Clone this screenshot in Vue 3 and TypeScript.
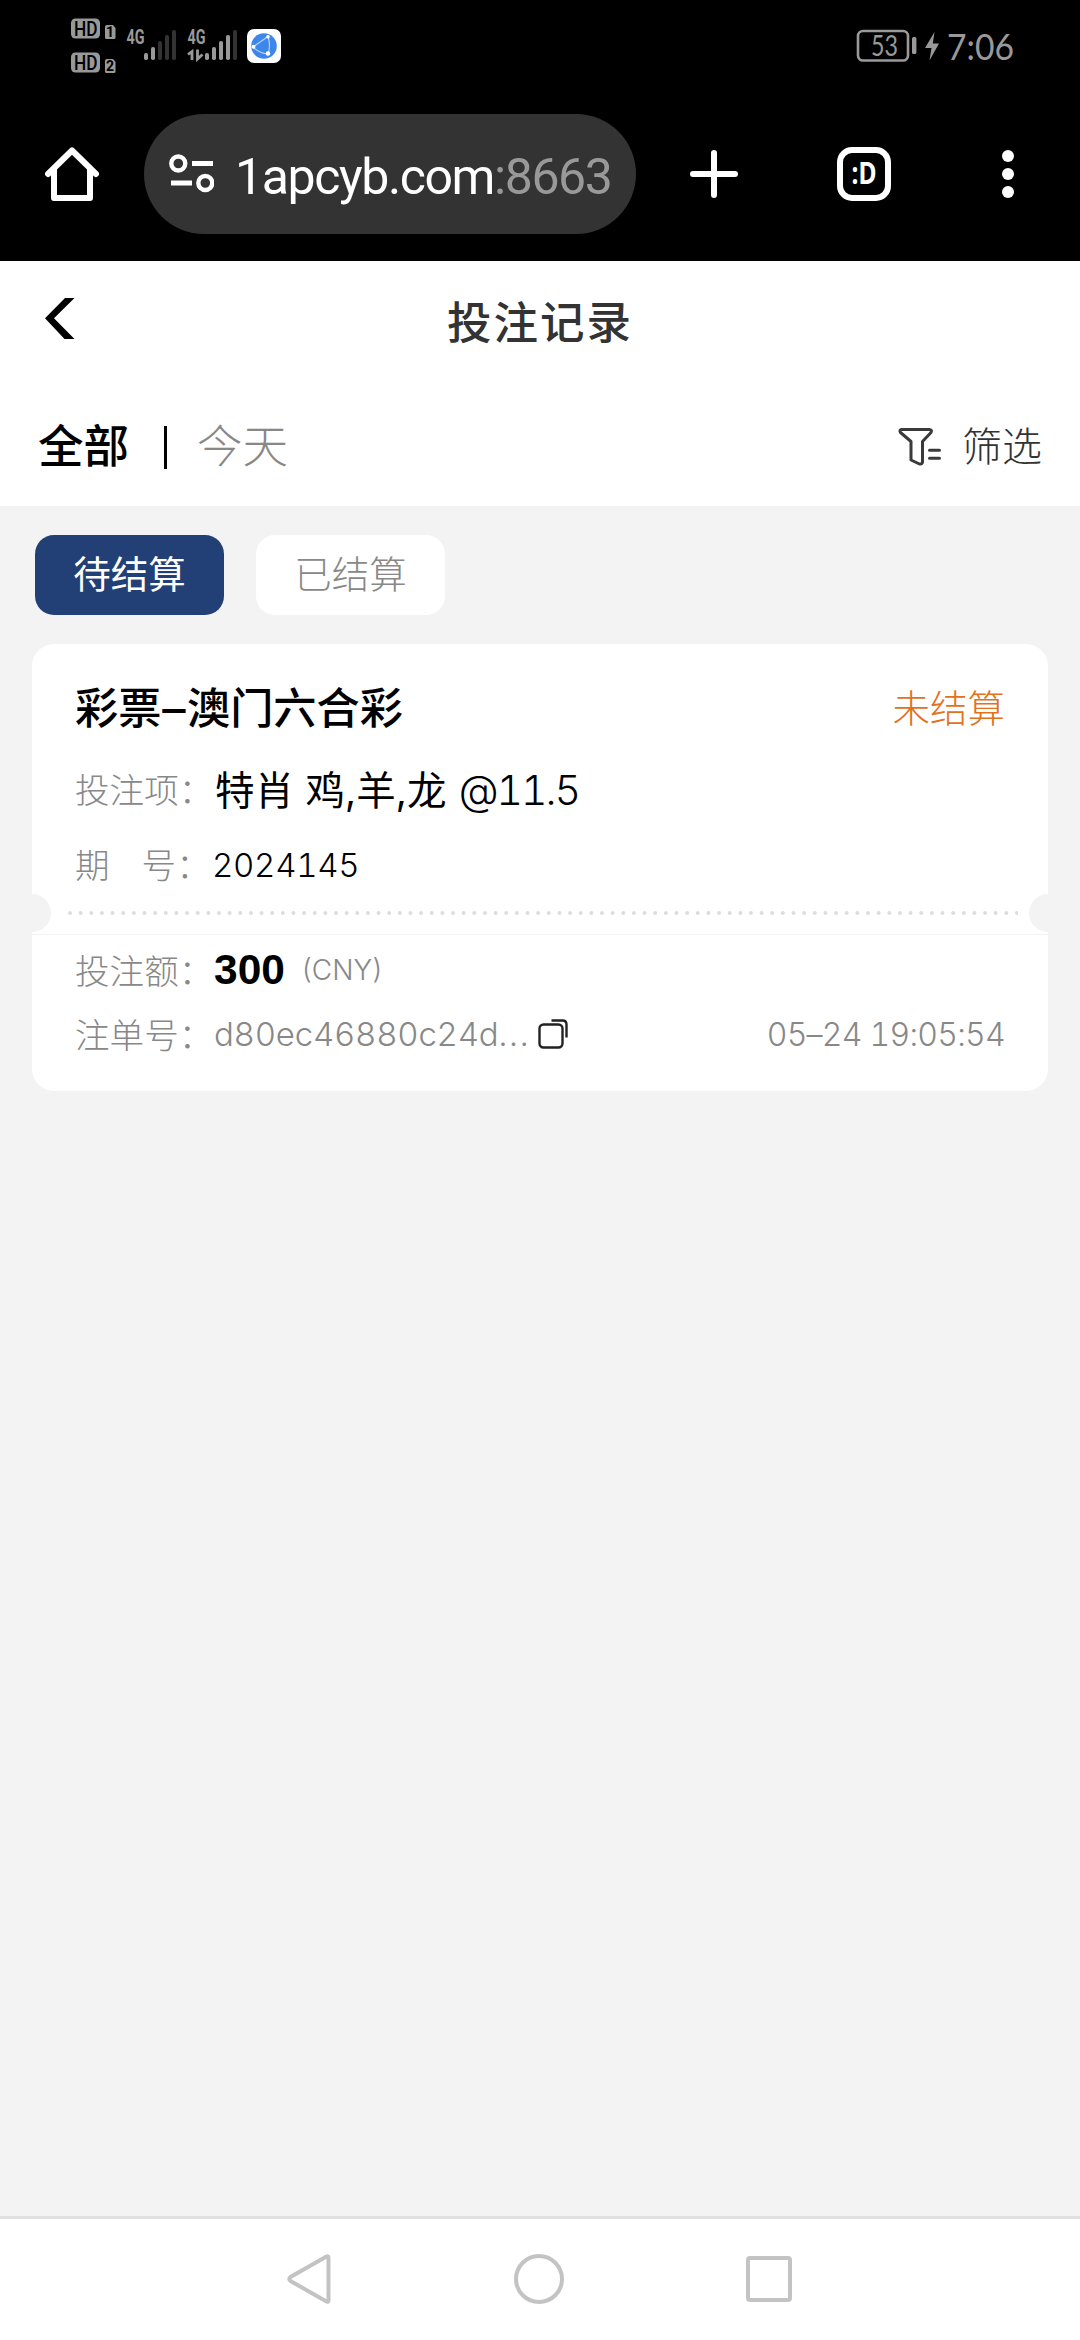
<script setup lang="ts">
import { ref } from 'vue'

interface Tab { key: string; label: string }

const ranges: Tab[] = [
  { key: 'all', label: '全部' },
  { key: 'today', label: '今天' },
]
const states: Tab[] = [
  { key: 'open', label: '待结算' },
  { key: 'settled', label: '已结算' },
]
const range = ref('all')
const state = ref('open')

const signalHeights: number[] = [7, 13, 19, 25, 30]
const signals = [
  { id: 1, x: 144, level: 2 },
  { id: 2, x: 205, level: 4 },
]
</script>

<template>
  <div class="screen">
    <header class="chrome">
      <div class="status">
        <svg class="status-left" width="300" height="90" viewBox="0 0 300 90">
          <g fill="#999">
            <rect x="71" y="18.500" width="29" height="20" rx="4.500" />
            <rect x="71" y="52.500" width="29" height="20" rx="4.500" />
            <path d="M107 25h6l2.500 3v9.500a1.500 1.500 0 0 1-1.500 1.500h-7.500a1.500 1.500 0 0 1-1.500-1.500V27a2 2 0 0 1 2-2z" />
            <path d="M107 59h6l2.500 3v9.500a1.500 1.500 0 0 1-1.500 1.500h-7.500a1.500 1.500 0 0 1-1.500-1.500V61a2 2 0 0 1 2-2z" />
          </g>
          <g class="hd">
            <text x="74" y="35.500" textLength="23.500" lengthAdjust="spacingAndGlyphs">HD</text>
            <text x="74" y="69.500" textLength="23.500" lengthAdjust="spacingAndGlyphs">HD</text>
          </g>
          <g class="slot">
            <text x="110" y="37">1</text>
            <text x="110" y="71">2</text>
          </g>
          <g class="net">
            <text x="126.500" y="43.500" textLength="18" lengthAdjust="spacingAndGlyphs">4G</text>
            <text x="187.500" y="43.500" textLength="18" lengthAdjust="spacingAndGlyphs">4G</text>
          </g>
          <g v-for="s in signals" :key="s.id">
            <rect
              v-for="(h, i) in signalHeights"
              :key="i"
              :x="s.x + i * 7"
              :y="60 - h"
              width="4"
              :height="h"
              rx="1.800"
              :fill="i < s.level ? '#999' : '#333'"
            />
          </g>
          <path d="M188 54.500l4-3v8.500M197.500 49.500v9.500l5-4.500" fill="none" stroke="#999" stroke-width="2.800" />
          <rect x="247" y="29" width="34" height="34" rx="7" fill="#fff" />
          <circle cx="264" cy="46" r="12.800" fill="#3d86ea" />
          <path d="M253 47L268 36.500Q271 45 268 54Q259 53 253 47z" stroke="#b5d2fa" stroke-width="1.200" fill="none" />
          <g fill="#fff">
            <circle cx="253.500" cy="46.800" r="2" />
            <circle cx="268" cy="36.800" r="1.800" />
            <circle cx="268" cy="53.500" r="2.300" />
          </g>
        </svg>
        <svg width="240" height="90" viewBox="840 0 240 90">
          <rect x="858" y="31" width="50" height="29.500" rx="5" fill="none" stroke="#999" stroke-width="2.600" />
          <rect x="912" y="37" width="4.400" height="17" rx="1.600" fill="#999" />
          <text class="battery" x="884.500" y="55.500" textLength="27" lengthAdjust="spacingAndGlyphs">53</text>
          <path d="M934.500 32L925 48h6.500l-2 12.500L939 43.500h-6.200z" fill="#999" />
          <text class="clock" x="947" y="59.500" textLength="67" lengthAdjust="spacingAndGlyphs">7:06</text>
        </svg>
      </div>
      <div class="browser">
        <svg class="home" width="54" height="54" viewBox="0 0 54 54" fill="none" stroke="#fff" stroke-width="6" stroke-linecap="round" stroke-linejoin="round">
          <path d="M3 27L27 3.500L51 27" />
          <path d="M9 22V51H45V22" />
        </svg>
        <div class="address">
          <svg width="46" height="40" viewBox="0 0 46 40" fill="none" stroke="#fff">
            <circle cx="10.300" cy="9.500" r="7" stroke-width="4.400" />
            <circle cx="37.300" cy="29" r="7" stroke-width="4.400" />
            <path d="M24 9.500H45M3 29H24" stroke-width="4.800" />
          </svg>
          <div class="url">1apcyb.com<span>:8663</span></div>
        </div>
        <svg class="plus" width="48" height="48" viewBox="0 0 48 48" stroke="#fff" stroke-width="6" stroke-linecap="round">
          <path d="M24 3V45M3 24H45" />
        </svg>
        <div class="tabcount"><span>:D</span></div>
        <svg class="more" width="12" height="48" viewBox="0 0 12 48" fill="#fff">
          <circle cx="6" cy="6" r="6" /><circle cx="6" cy="24" r="6" /><circle cx="6" cy="42" r="6" />
        </svg>
      </div>
    </header>

    <section class="head">
      <div class="titlebar">
        <svg class="back" width="30" height="41" viewBox="0 0 30 41">
          <path d="M20 0H29.500L9 20.300L29.500 41H19.500L0 20.300z" fill="#000" />
        </svg>
        <h1>投注记录</h1>
        <i class="spacer"></i>
      </div>
      <div class="ranges">
        <template v-for="(r, i) in ranges" :key="r.key">
          <i v-if="i" class="bar"></i>
          <button :class="['range', { on: range === r.key }]" @click="range = r.key">{{ r.label }}</button>
        </template>
        <div class="filter">
          <svg width="44" height="40" viewBox="0 0 44 40" fill="none" stroke="#3a3a3a" stroke-width="3" stroke-linejoin="round" stroke-linecap="round">
            <path d="M3.500 2.500H31.500Q34.500 3 33 5.500L24.500 14.500V35Q24 37.500 21.500 37L13 33V14.500L2.500 5.500Q1 3 3.500 2.500z" />
            <path d="M31.500 23.200H41.500M31.500 31.200H41.500" />
          </svg>
          <span>筛选</span>
        </div>
      </div>
    </section>

    <main>
      <div class="states">
        <button v-for="s in states" :key="s.key" :class="['state', { on: state === s.key }]" @click="state = s.key">{{ s.label }}</button>
      </div>

      <article class="card">
        <div class="upper">
          <div class="row r1">
            <h2>彩票<b class="dash">–</b>澳门六合彩</h2>
            <span class="pending">未结算</span>
          </div>
          <div class="row r2">
            <span class="label">投注项：</span>
            <span class="pick">特肖 鸡,羊,龙 <span class="odds">@11.5</span></span>
          </div>
          <div class="row r3">
            <span class="label issue"><span>期</span><span>号：</span></span>
            <span class="num">2024145</span>
          </div>
          <div class="tear">
            <i class="notch left"></i>
            <svg width="956" height="6" viewBox="0 0 956 6">
              <path d="M8 3H956" stroke="#ddd" stroke-width="4" stroke-linecap="round" stroke-dasharray="0 10.640" />
            </svg>
            <i class="notch right"></i>
          </div>
        </div>
        <div class="lower">
          <div class="row r4">
            <span class="label">投注额：</span>
            <strong>300</strong>
            <span class="cur">(CNY)</span>
          </div>
          <div class="row r5">
            <span class="label">注单号：</span>
            <span class="order">d80ec46880c24d<span class="dots">...</span></span>
            <svg class="copy" width="30" height="30" viewBox="0 0 30 30" fill="none" stroke="#222" stroke-width="2.400">
              <rect x="1.500" y="5.500" width="23" height="23" rx="4" />
              <path d="M13.500 1.500H24.500Q28.500 1.500 28.500 5.500V18.500" />
            </svg>
            <time>05–24 19:05:54</time>
          </div>
        </div>
      </article>
    </main>

    <nav class="sysnav">
      <svg width="44" height="50" viewBox="0 0 44 50"><path d="M39.500 2.500Q41.500 1.500 41.500 4V46Q41.500 48.500 39.500 47.500L3.500 27Q1 25 3.500 23z" /></svg>
      <svg width="50" height="50" viewBox="0 0 50 50"><circle cx="25" cy="25" r="23" /></svg>
      <svg width="46" height="46" viewBox="0 0 46 46"><rect x="2" y="2" width="42" height="42" rx="2" /></svg>
    </nav>
  </div>
</template>

<style>
body { background: #f3f3f3; }
</style>

<style scoped>
.screen {
  width: 1080px;
  height: 2340px;
  display: flex;
  flex-direction: column;
  overflow: hidden;
  background: #f3f3f3;
  font-family: Inter, "Noto Sans CJK SC", sans-serif;
  font-weight: 300;
  color: #000;
}
svg { display: block; flex: none; }
h1, h2 { margin: 0; }
button { border: 0; padding: 0; background: none; font: inherit; }

.chrome { height: 261px; background: #000; flex: none; }
.status { height: 90px; display: flex; justify-content: space-between; }
.hd text { font: 500 20px Roboto, sans-serif; fill: #000; }
.slot text { font: 700 14px Roboto, sans-serif; fill: #000; text-anchor: middle; }
.net text { font: 700 20px Roboto, sans-serif; fill: #999; }
.battery { font: 400 28px Lato, sans-serif; fill: #999; text-anchor: middle; }
.clock { font: 400 36px Lato, sans-serif; fill: #999; }

.browser { display: flex; align-items: center; padding: 24px 66px 0 45px; height: 120px; }
.address {
  width: 492px;
  height: 120px;
  margin-left: 45px;
  padding-left: 24px;
  box-sizing: border-box;
  border-radius: 60px;
  background: #333;
  display: flex;
  align-items: center;
}
.url {
  margin-left: 21px;
  font: 400 50px/60px Roboto, sans-serif;
  letter-spacing: -1.400px;
  color: #fff;
  white-space: nowrap;
  padding-top: 6px;
}
.url span { color: #999; }
.plus { margin-left: 54px; }
.tabcount {
  width: 54px;
  height: 54px;
  box-sizing: border-box;
  margin-left: 99px;
  border: 6px solid #fff;
  border-radius: 15px;
  color: #fff;
  font: 700 30px/39px "Noto Sans", sans-serif;
  text-align: center;
}
.tabcount span { display: block; transform: scaleX(.82); }
.more { margin-left: 111px; }

.head { background: #fff; height: 245px; flex: none; }
.titlebar { height: 123px; padding: 0 45px; display: flex; align-items: center; justify-content: space-between; }
.back { margin-bottom: 8px; }
.spacer { width: 30px; }
h1 { font-weight: 500; font-size: 44.500px; line-height: 60px; letter-spacing: 2px; color: #333; padding-top: 1px; }
.ranges { display: flex; align-items: center; height: 126px; padding: 0 38px 0 38px; }
.range { font-size: 45.500px; line-height: 60px; color: #888; padding-top: 0; }
.range.on { font-weight: 500; color: #000; }
.bar { width: 3px; height: 43px; margin: 0 30px 0 35px; background: #000; }
.filter { margin-left: auto; display: flex; align-items: center; font-size: 40px; line-height: 60px; color: #333; }
.filter span { margin: -1px 0 0 20px; }

main { flex: 1; padding: 29px 32px 0; }
.states { display: flex; gap: 32px; padding-left: 3px; }
.state { width: 189px; height: 80px; border-radius: 19px; background: #fff; color: #888; font-size: 37.500px; line-height: 80px; }
.state.on { background: #223f76; color: #fff; font-weight: 400; }

.card { margin-top: 29px; font-feature-settings: "tnum"; }
.upper { height: 290px; box-sizing: border-box; background: #fff; border-radius: 22px 22px 0 0; }
.lower { height: 156px; margin-top: 1px; background: #fff; border-radius: 0 0 22px 22px; }
.row { display: flex; align-items: center; padding: 0 43px; white-space: nowrap; box-sizing: border-box; }
.r1 { height: 128px; justify-content: space-between; padding-bottom: 6px; }
.r2 { height: 37px; padding-bottom: 6px; }
.r3 { height: 111px; }
.r4 { height: 72px; padding-bottom: 2px; }
.r5 { height: 58px; padding-bottom: 4px; }
h2 { font-size: 43.200px; font-weight: 500; }
.dash { font-weight: 500; display: inline-block; transform: scaleX(1.08); margin: 0 2px; }
.pending { color: #e2711d; font-size: 37.500px; }
.label { width: 140px; flex: none; font-size: 34.600px; color: #888; margin-top: -3px; }
.r2 .label { margin-top: 1px; }
.issue { display: flex; }
.issue span + span { margin-left: 32px; }
.pick { font-size: 39.500px; font-weight: 400; letter-spacing: .3px; }
.odds { font-weight: 300; font-size: 41px; letter-spacing: -2px; margin-left: 1px; }
.num { font-size: 33px; margin-left: -3px; letter-spacing: -.3px; }
.tear { height: 38px; margin-top: -26px; display: flex; align-items: center; justify-content: space-between; }
.notch { width: 19px; height: 38px; background: #f3f3f3; }
.left { border-radius: 0 19px 19px 0; }
.right { border-radius: 19px 0 0 19px; }
strong { font: 700 42.500px/60px "Liberation Sans", sans-serif; margin-left: -1px; }
.cur { font-size: 28px; color: #888; margin-left: 16px; }
.order { font-size: 33px; color: #888; letter-spacing: -.25px; margin-left: -1px; }
.dots { letter-spacing: 1.800px; }
.copy { margin-left: 8px; }
time { margin-left: auto; font-size: 32px; letter-spacing: -.75px; color: #888; }

.sysnav {
  height: 119px;
  flex: none;
  border-top: 3px solid #e0e0e0;
  background: #fff;
  display: flex;
  align-items: center;
  padding: 0 288px 2px 287px;
  justify-content: space-between;
}
.sysnav svg { fill: none; stroke: #c3c3c3; stroke-width: 4; }
</style>
